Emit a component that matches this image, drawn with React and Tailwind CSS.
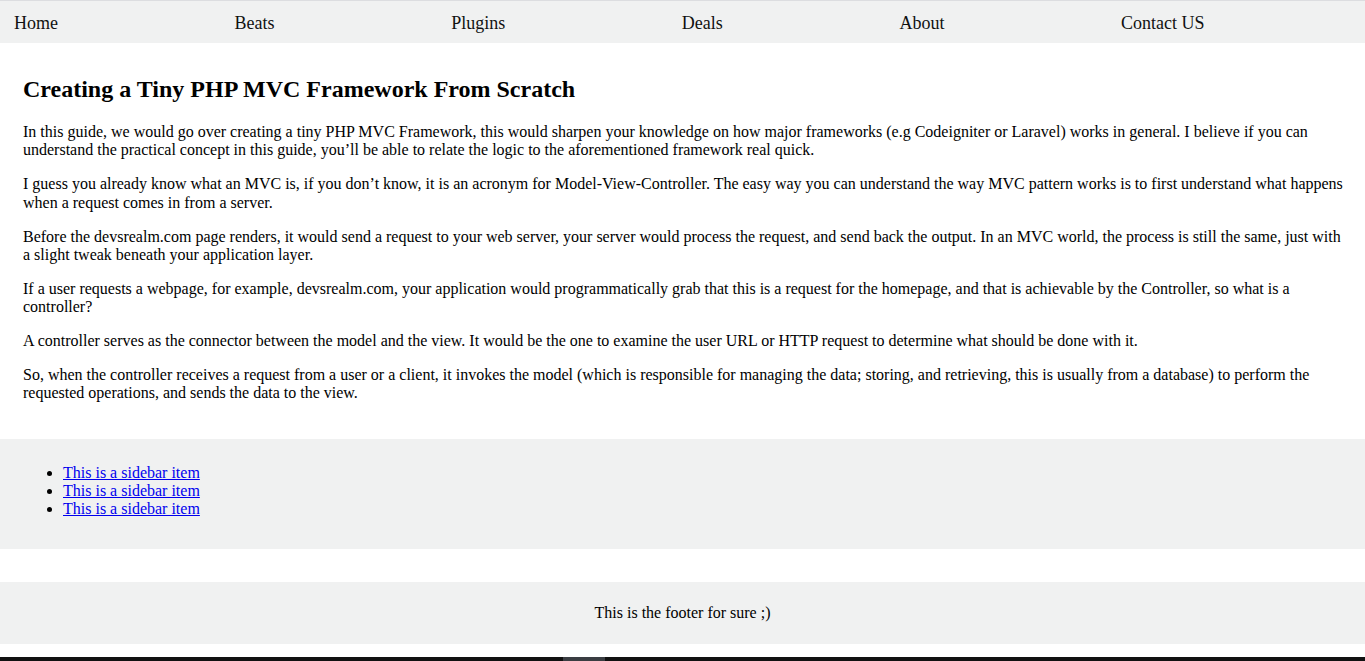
export default function App() {
  const nav = ["Home", "Beats", "Plugins", "Deals", "About", "Contact US"];
  const paragraphs = [
    "In this guide, we would go over creating a tiny PHP MVC Framework, this would sharpen your knowledge on how major frameworks (e.g Codeigniter or Laravel) works in general. I believe if you can understand the practical concept in this guide, you\u2019ll be able to relate the logic to the aforementioned framework real quick.",
    "I guess you already know what an MVC is, if you don\u2019t know, it is an acronym for Model-View-Controller. The easy way you can understand the way MVC pattern works is to first understand what happens when a request comes in from a server.",
    "Before the devsrealm.com page renders, it would send a request to your web server, your server would process the request, and send back the output. In an MVC world, the process is still the same, just with a slight tweak beneath your application layer.",
    "If a user requests a webpage, for example, devsrealm.com, your application would programmatically grab that this is a request for the homepage, and that is achievable by the Controller, so what is a controller?",
    "A controller serves as the connector between the model and the view. It would be the one to examine the user URL or HTTP request to determine what should be done with it.",
    "So, when the controller receives a request from a user or a client, it invokes the model (which is responsible for managing the data; storing, and retrieving, this is usually from a database) to perform the requested operations, and sends the data to the view.",
  ];

  return (
    <div className="h-[661px] flex flex-col bg-white text-black font-['Liberation_Serif','Times_New_Roman',serif] leading-[1.15] overflow-hidden">
      {/* Nav */}
      <nav className="h-[43px] shrink-0 border-t border-[#dcdde0] bg-[#f0f1f1] flex items-center pt-[2px] pl-[14px] gap-[176.6px] text-[18px] text-[#111]">
        {nav.map((item) => (
          <a key={item} href="#" className="whitespace-nowrap">
            {item}
          </a>
        ))}
      </nav>

      {/* Main */}
      <main className="pl-[23px] pr-[19px] pt-[32px] pb-[36px]">
        <h2 className="text-[24px] font-bold leading-[28px] mb-[20px]">
          Creating a Tiny PHP MVC Framework From Scratch
        </h2>
        <div className="flex flex-col gap-[15.7px] text-[16px] leading-[18.3px]">
          {paragraphs.map((p, i) => (
            <p key={i}>{p}</p>
          ))}
        </div>
      </main>

      {/* Sidebar */}
      <aside className="bg-[#f0f1f1] px-[23px] pt-[25px] pb-[31px] text-[16px]">
        <ul className="list-disc pl-[40px] leading-[18px]">
          {[0, 1, 2].map((i) => (
            <li key={i}>
              <a href="#" className="text-[#0000ee] underline">
                This is a sidebar item
              </a>
            </li>
          ))}
        </ul>
      </aside>

      {/* Footer */}
      <footer className="mt-[33px] h-[62px] bg-[#f0f1f1] flex items-center justify-center text-[16px]">
        This is the footer for sure ;)
      </footer>

      <div className="mt-auto h-[4px] bg-[#111] flex">
        <div className="ml-[563px] w-[42px] bg-[#3a3d42]" />
      </div>
    </div>
  );
}
